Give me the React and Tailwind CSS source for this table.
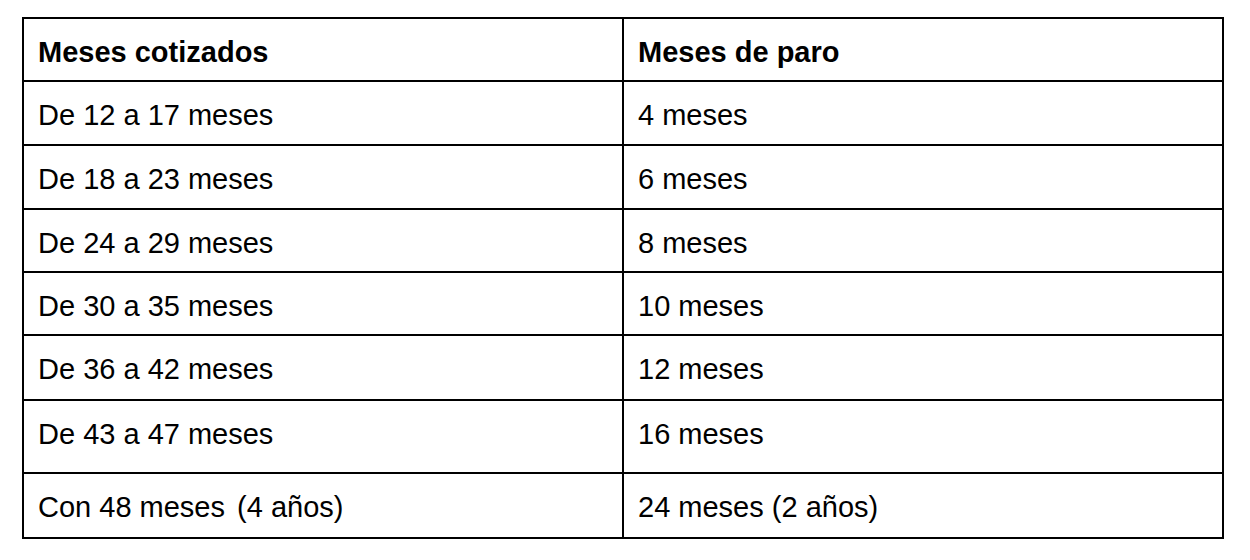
const rows = [
  { a: "De 12 a 17 meses", b: "4 meses", h: "h-[64px]" },
  { a: "De 18 a 23 meses", b: "6 meses", h: "h-[64px]" },
  { a: "De 24 a 29 meses", b: "8 meses", h: "h-[63px]" },
  { a: "De 30 a 35 meses", b: "10 meses", h: "h-[63px]" },
  { a: "De 36 a 42 meses", b: "12 meses", h: "h-[65px]" },
  { a: "De 43 a 47 meses", b: "16 meses", h: "h-[73px]" },
  {
    a: (
      <>
        Con 48 meses<span className="inline-block w-[4px]" /> (4 años)
      </>
    ),
    b: "24 meses (2 años)",
    h: "h-[65px]",
  },
];

function Cell({ children, bold, h }) {
  return (
    <div
      className={`${h} border-r-2 border-b-2 border-black pl-[14px] pt-[17px] text-[29px] leading-[1.15] text-black ${bold ? "font-bold" : ""}`}
    >
      {children}
    </div>
  );
}

export default function App() {
  return (
    <div
      className="min-h-[560px] w-[1250px] bg-white pt-[17px] pl-[22px]"
      style={{ fontFamily: '"Liberation Sans", Arial, sans-serif' }}
    >
      <div className="grid w-[1202px] grid-cols-[600px_600px] border-t-2 border-l-2 border-black">
        <Cell bold h="h-[63px]">Meses cotizados</Cell>
        <Cell bold h="h-[63px]">Meses de paro</Cell>
        {rows.map((r, i) => (
          <div key={i} className="contents">
            <Cell h={r.h}>{r.a}</Cell>
            <Cell h={r.h}>{r.b}</Cell>
          </div>
        ))}
      </div>
    </div>
  );
}
